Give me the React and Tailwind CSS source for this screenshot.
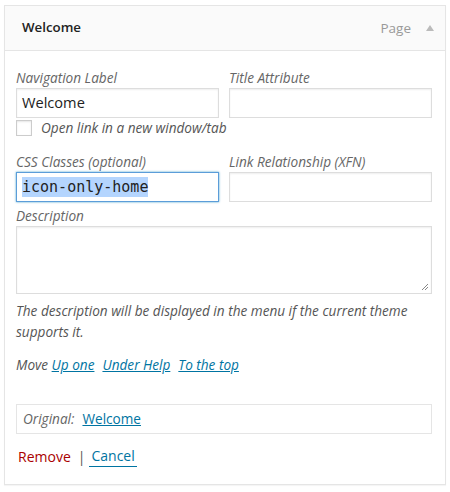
import React from "react";

const Field = ({ label, children }) => (
  <div className="flex flex-col">
    <label className="text-[13.6px] italic text-[#666] leading-[20px]">{label}</label>
    {children}
  </div>
);

const Box = ({ value, focused }) => (
  <div
    className={`h-[30px] w-[203px] border bg-white flex items-center px-[5px] ${
      focused ? "border-[#5b9dd9] shadow-[0_0_2px_rgba(30,140,190,0.8)]" : "border-[#ddd] shadow-[inset_0_1px_2px_rgba(0,0,0,0.07)]"
    }`}
  >
    {value}
  </div>
);

export default function App() {
  return (
    <div className="w-[450px] h-[492px] bg-white pt-[5px] px-[4px] font-['Open_Sans',sans-serif] text-[#333]">
      <div className="w-[442px] border border-[#e5e5e5] shadow-[0_1px_1px_rgba(0,0,0,0.04)]">
        <div className="h-[45px] bg-[#fafafa] border-b border-[#e5e5e5] flex items-center pl-[17px] pr-[11px]">
          <span className="text-[13.3px] font-semibold text-[#222] flex-1">Welcome</span>
          <span className="text-[13.5px] text-[#999]">Page</span>
          <span className="ml-[15px] w-0 h-0 border-l-[4px] border-r-[4px] border-b-[6px] border-l-transparent border-r-transparent border-b-[#bbb]"></span>
        </div>
        <div className="px-[11px] pt-[17px] pb-[17px]">
          <div className="flex gap-[10px]">
            <Field label="Navigation Label">
              <Box value={<span className="text-[14.6px] text-[#222]">Welcome</span>} />
            </Field>
            <Field label="Title Attribute">
              <Box />
            </Field>
          </div>
          <div className="flex items-center mt-[2px] h-[16px]">
            <span className="w-[16px] h-[16px] border border-[#ccc] bg-white shadow-[inset_0_1px_2px_rgba(0,0,0,0.1)]"></span>
            <span className="ml-[9px] text-[13.6px] italic text-[#555]">Open link in a new window/tab</span>
          </div>
          <div className="flex gap-[10px] mt-[16px]">
            <Field label="CSS Classes (optional)">
              <Box
                focused
                value={
                  <span className="font-['DejaVu_Sans_Mono',monospace] text-[15px] text-[#222] bg-[#b4d5fe] leading-[20px]">
                    icon-only-home
                  </span>
                }
              />
            </Field>
            <Field label="Link Relationship (XFN)">
              <Box />
            </Field>
          </div>
          <div className="mt-[4px]">
            <Field label="Description">
              <div className="relative h-[68px] w-[416px] border border-[#ddd] bg-white shadow-[inset_0_1px_2px_rgba(0,0,0,0.07)]">
                <svg className="absolute right-[2px] bottom-[2px]" width="8" height="8" viewBox="0 0 8 8">
                  <path d="M7 1L1 7M7 4L4 7" stroke="#888" strokeWidth="1" />
                </svg>
              </div>
            </Field>
          </div>
          <p className="mt-[6px] text-[13.6px] italic text-[#555] leading-[21px] pr-[12px]">
            The description will be displayed in the menu if the current theme supports it.
          </p>
          <div className="mt-[13px] text-[13.6px] italic text-[#555] leading-[20px]">
            Move{" "}
            <a className="text-[#0074a2] underline">Up one</a>
            <span className="ml-[8px]"></span>
            <a className="text-[#0074a2] underline">Under Help</a>
            <span className="ml-[8px]"></span>
            <a className="text-[#0074a2] underline">To the top</a>
          </div>
          <div className="mt-[29px] h-[30px] w-[416px] border border-[#e5e5e5] flex items-center px-[6px] text-[13.6px]">
            <span className="italic text-[#666]">Original:</span>
            <a className="ml-[8px] text-[#0074a2] underline">Welcome</a>
          </div>
          <div className="mt-[12px] flex items-center text-[14px] pl-[2px]">
            <span className="text-[#a00]">Remove</span>
            <span className="ml-[7px] mr-[4px] text-[#555]">|</span>
            <span className="text-[#0074a2] border-b border-[#0074a2] leading-[20px] px-[2px]">Cancel</span>
          </div>
        </div>
      </div>
    </div>
  );
}
